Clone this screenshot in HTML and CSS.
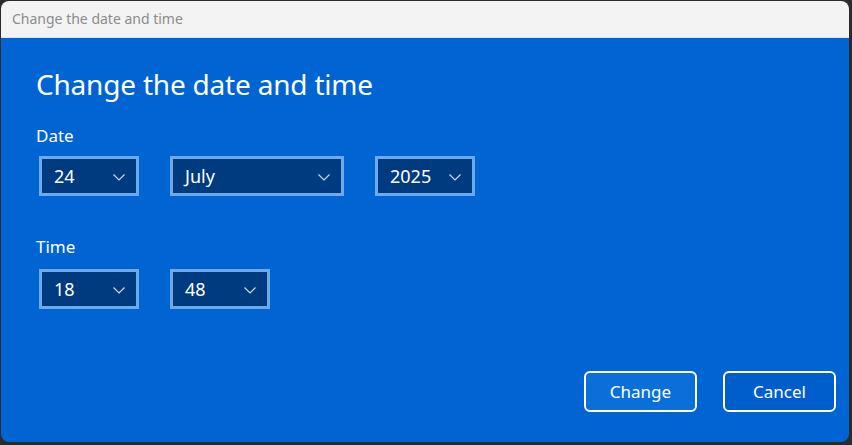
FILE: index.html
```html
<!DOCTYPE html>
<html lang="en">
<head>
<meta charset="utf-8">
<title>Change the date and time</title>
<link rel="stylesheet" href="styles.css">
</head>
<body>
<div class="window">
  <div class="titlebar">Change the date and time</div>
  <div class="content">
    <h1 class="heading">Change the date and time</h1>
    <div class="label label-date">Date</div>
    <div class="row">
      <div class="select select-sm"><span>24</span><svg class="chev" width="12" height="7" viewBox="0 0 12 7"><polyline points="0.5,0.5 6,6 11.5,0.5"/></svg></div>
      <div class="select select-lg"><span>July</span><svg class="chev" width="12" height="7" viewBox="0 0 12 7"><polyline points="0.5,0.5 6,6 11.5,0.5"/></svg></div>
      <div class="select select-sm"><span>2025</span><svg class="chev" width="12" height="7" viewBox="0 0 12 7"><polyline points="0.5,0.5 6,6 11.5,0.5"/></svg></div>
    </div>
    <div class="label label-time">Time</div>
    <div class="row row-time">
      <div class="select select-sm"><span>18</span><svg class="chev" width="12" height="7" viewBox="0 0 12 7"><polyline points="0.5,0.5 6,6 11.5,0.5"/></svg></div>
      <div class="select select-sm"><span>48</span><svg class="chev" width="12" height="7" viewBox="0 0 12 7"><polyline points="0.5,0.5 6,6 11.5,0.5"/></svg></div>
    </div>
    <div class="actions">
      <button class="btn btn-primary">Change</button>
      <button class="btn btn-secondary">Cancel</button>
    </div>
  </div>
</div>
</body>
</html>
```
FILE: styles.css
```css
html, body {
  margin: 0;
  padding: 0;
  background: #2b2b2b;
  width: 852px;
  height: 445px;
  overflow: hidden;
}
body {
  font-family: "Noto Sans", "Open Sans", "Liberation Sans", sans-serif;
  padding: 1px 3px 3px 1px;
  box-sizing: border-box;
}
.window {
  width: 848px;
  height: 441px;
  border-radius: 8px;
  overflow: hidden;
  display: flex;
  flex-direction: column;
}
.titlebar {
  height: 36px;
  flex: none;
  background: #f3f3f3;
  border-bottom: 1px solid #d9e2ee;
  color: #8c8c8c;
  font-size: 14px;
  line-height: 36px;
  padding-left: 11px;
}
.content {
  flex: 1;
  background: #0064d2;
  color: #ffffff;
  padding: 27px 0 0 35px;
  display: flex;
  flex-direction: column;
}
.heading {
  margin: 0;
  font-size: 28px;
  font-weight: 400;
  line-height: 38px;
  letter-spacing: -0.2px;
}
.label {
  font-size: 17px;
  line-height: 24px;
}
.label-date { margin-top: 21px; }
.label-time { margin-top: 39px; }
.row {
  display: flex;
  gap: 31px;
  margin-top: 8px;
  padding-left: 3px;
}
.row-time { margin-top: 10px; }
.select {
  box-sizing: border-box;
  height: 40px;
  border: 3px solid #6ea9ec;
  background: #003b80;
  display: flex;
  align-items: center;
  justify-content: space-between;
  padding: 0 11px 0 12px;
  font-size: 18px;
}
.select-sm { width: 100px; }
.select-lg { width: 174px; }
.chev {
  fill: none;
  stroke: #c4dbf6;
  stroke-width: 1.2;
  margin-top: 2px;
}
.actions {
  margin-top: auto;
  margin-bottom: 30px;
  display: flex;
  justify-content: flex-end;
  gap: 26px;
  padding-right: 13px;
}
.btn {
  width: 113px;
  height: 41px;
  border: 2px solid #ffffff;
  border-radius: 6px;
  color: #ffffff;
  font-family: inherit;
  font-size: 17px;
  padding: 0;
}
.btn-primary { background: #0a6fd8; }
.btn-secondary { background: #005ecc; }
```
